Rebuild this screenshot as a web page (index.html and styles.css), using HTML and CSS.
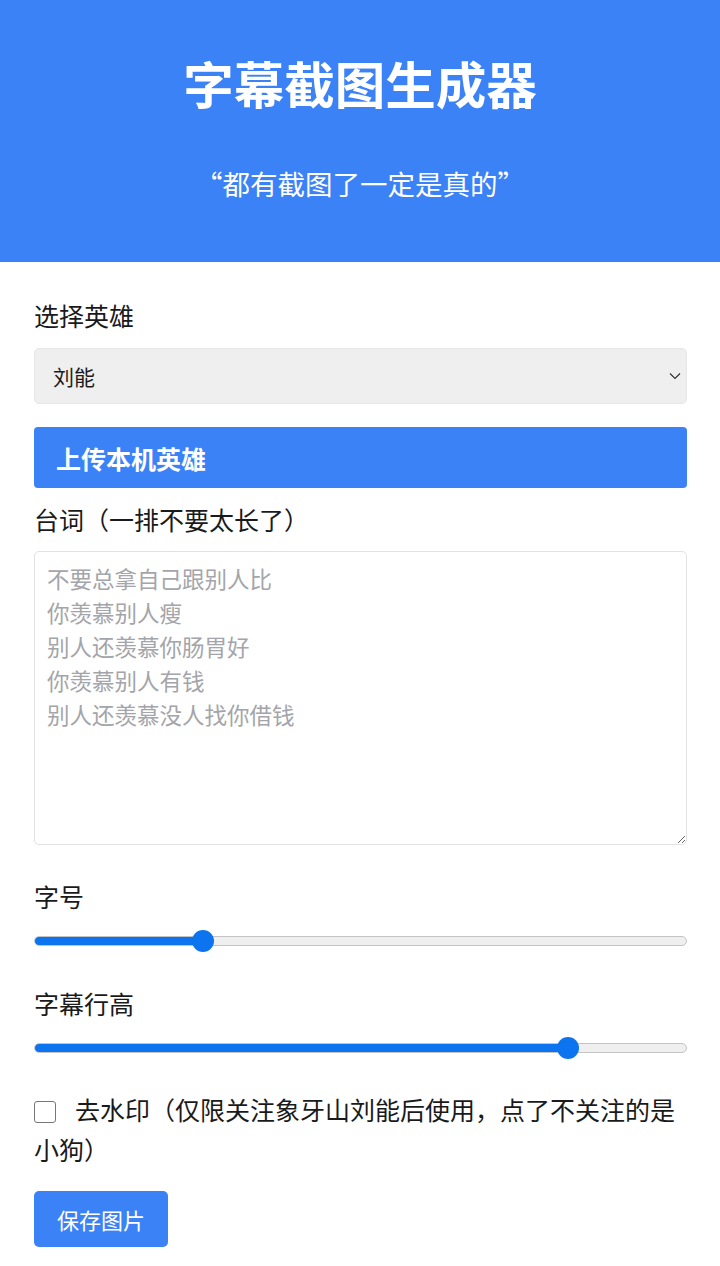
FILE: index.html
```html
<!DOCTYPE html>
<html lang="zh-CN">
<head>
<meta charset="utf-8">
<title>字幕截图生成器</title>
<link rel="stylesheet" href="styles.css">
</head>
<body>
<header class="hero">
  <h1 class="hero-title">字幕截图生成器</h1>
  <p class="hero-sub">“都有截图了一定是真的”</p>
</header>
<main class="form">
  <label class="label label-first" for="hero">选择英雄</label>
  <div class="select-wrap">
    <select id="hero" class="select">
      <option>刘能</option>
    </select>
    <svg class="chevron" width="12" height="8" viewBox="0 0 12 8"><path d="M1 1.5 L6 6.5 L11 1.5" fill="none" stroke="#333" stroke-width="1.2"/></svg>
  </div>
  <button class="upload" type="button">上传本机英雄</button>
  <label class="label label-lines" for="lines">台词（一排不要太长了）</label>
  <textarea id="lines" class="lines" placeholder="不要总拿自己跟别人比&#10;你羡慕别人瘦&#10;别人还羡慕你肠胃好&#10;你羡慕别人有钱&#10;别人还羡慕没人找你借钱"></textarea>
  <label class="label label-gap" for="size">字号</label>
  <input id="size" class="range" type="range" min="0" max="100" value="25" style="--p: 27%">
  <label class="label label-gap" for="lh">字幕行高</label>
  <input id="lh" class="range" type="range" min="0" max="100" value="83" style="--p: 82%">
  <p class="check"><input type="checkbox" class="check-box" id="wm"><label for="wm">去水印（仅限关注象牙山刘能后使用，点了不关注的是小狗）</label></p>
  <div class="actions">
    <button class="save" type="button">保存图片</button>
  </div>
</main>
</body>
</html>
```
FILE: styles.css
```css
* { box-sizing: border-box; }
body {
  margin: 0;
  font-family: "Noto Sans CJK SC", "Noto Sans", sans-serif;
  color: #1c1c1c;
  background: #fff;
}
.hero {
  background: #3b82f6;
  color: #fff;
  text-align: center;
  padding: 52px 20px 61px;
}
.hero-title {
  margin: 0;
  font-size: 50.5px;
  line-height: 60px;
  font-weight: 700;
}
.hero-sub {
  margin: 53px 0 0;
  font-size: 27.5px;
  line-height: 36px;
  font-weight: 400;
}
.form {
  display: flex;
  flex-direction: column;
  padding: 0 33px 40px 34px;
}
.label {
  display: block;
  font-size: 25px;
  line-height: 36px;
  color: #1a1a1a;
}
.label-first { margin-top: 35px; }
.label-lines { margin-top: 13px; }
.label-gap { margin-top: 33px; }
.select-wrap {
  position: relative;
  margin-top: 15px;
}
.select {
  -webkit-appearance: none;
  appearance: none;
  display: block;
  width: 100%;
  height: 56px;
  padding: 0 40px 0 18px;
  font-family: inherit;
  font-size: 21px;
  color: #1c1c1c;
  background: #efefef;
  border: 1px solid #e6e6e6;
  border-radius: 5px;
}
.chevron {
  position: absolute;
  right: 6px;
  top: 24px;
}
.upload {
  margin-top: 23px;
  height: 61px;
  padding: 0 22px;
  text-align: left;
  font-family: inherit;
  font-size: 25px;
  font-weight: 700;
  color: #fff;
  background: #3b82f6;
  border: none;
  border-radius: 4px;
}
.lines {
  margin-top: 14px;
  height: 294px;
  padding: 9px 12px;
  font-family: inherit;
  font-size: 22.5px;
  line-height: 34px;
  color: #1c1c1c;
  border: 1px solid #e2e2e2;
  border-radius: 5px;
}
.lines::placeholder { color: #a3a5aa; }
.range {
  -webkit-appearance: none;
  appearance: none;
  width: 100%;
  height: 22px;
  margin: 16px 0 0;
  background: transparent;
}
.range::-webkit-slider-runnable-track {
  height: 10px;
  border-radius: 5px;
  border: 1px solid #c4c4c4;
  background: linear-gradient(to right, #0b74ee var(--p), #efefef var(--p));
}
.range::-webkit-slider-thumb {
  -webkit-appearance: none;
  appearance: none;
  width: 22px;
  height: 22px;
  margin-top: -7px;
  border-radius: 50%;
  background: #0b74ee;
  border: none;
}
.check {
  margin: 30px 0 0;
  font-size: 25px;
  line-height: 40px;
  color: #1a1a1a;
}
.check-box {
  -webkit-appearance: none;
  appearance: none;
  width: 22px;
  height: 22px;
  margin: 0 19px 0 0;
  vertical-align: -3px;
  border: 1.5px solid #777;
  border-radius: 3px;
  background: #fff;
}
.actions {
  display: flex;
  margin-top: 22px;
}
.save {
  height: 56px;
  padding: 0 23px;
  font-family: inherit;
  font-size: 22px;
  color: #fff;
  background: #3b82f6;
  border: none;
  border-radius: 5px;
}
```
